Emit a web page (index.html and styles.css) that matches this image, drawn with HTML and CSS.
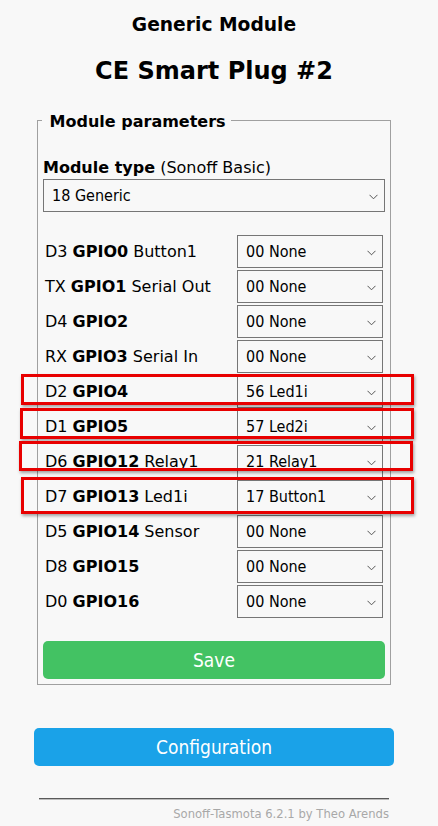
FILE: index.html
```html
<!DOCTYPE html>
<html>
<head>
<meta charset="utf-8">
<link rel="stylesheet" href="styles.css">
</head>
<body>
<div class="page">
  <h3 class="t1">Generic Module</h3>
  <h2 class="t2">CE Smart Plug #2</h2>
  <div class="main">
    <fieldset class="fs">
      <legend class="lg"><b>&nbsp;Module parameters&nbsp;</b></legend>
      <div class="mlabel"><b>Module type</b> (Sonoff Basic)</div>
      <div class="sel wide"><span>18 Generic</span><svg class="chev" width="9" height="6" viewBox="0 0 9 6"><polyline points="0.5,0.8 4.5,4.8 8.5,0.8" fill="none" stroke="#555" stroke-width="1"/></svg></div>
      <div class="rows">
        <div class="row"><div class="lab">D3 <b>GPIO0</b> Button1</div><div class="sel"><span>00 None</span><svg class="chev" width="9" height="6" viewBox="0 0 9 6"><polyline points="0.5,0.8 4.5,4.8 8.5,0.8" fill="none" stroke="#555" stroke-width="1"/></svg></div></div>
        <div class="row"><div class="lab">TX <b>GPIO1</b> Serial Out</div><div class="sel"><span>00 None</span><svg class="chev" width="9" height="6" viewBox="0 0 9 6"><polyline points="0.5,0.8 4.5,4.8 8.5,0.8" fill="none" stroke="#555" stroke-width="1"/></svg></div></div>
        <div class="row"><div class="lab">D4 <b>GPIO2</b></div><div class="sel"><span>00 None</span><svg class="chev" width="9" height="6" viewBox="0 0 9 6"><polyline points="0.5,0.8 4.5,4.8 8.5,0.8" fill="none" stroke="#555" stroke-width="1"/></svg></div></div>
        <div class="row"><div class="lab">RX <b>GPIO3</b> Serial In</div><div class="sel"><span>00 None</span><svg class="chev" width="9" height="6" viewBox="0 0 9 6"><polyline points="0.5,0.8 4.5,4.8 8.5,0.8" fill="none" stroke="#555" stroke-width="1"/></svg></div></div>
        <div class="row"><div class="lab">D2 <b>GPIO4</b></div><div class="sel"><span>56 Led1i</span><svg class="chev" width="9" height="6" viewBox="0 0 9 6"><polyline points="0.5,0.8 4.5,4.8 8.5,0.8" fill="none" stroke="#555" stroke-width="1"/></svg></div></div>
        <div class="row"><div class="lab">D1 <b>GPIO5</b></div><div class="sel"><span>57 Led2i</span><svg class="chev" width="9" height="6" viewBox="0 0 9 6"><polyline points="0.5,0.8 4.5,4.8 8.5,0.8" fill="none" stroke="#555" stroke-width="1"/></svg></div></div>
        <div class="row"><div class="lab">D6 <b>GPIO12</b> Relay1</div><div class="sel"><span>21 Relay1</span><svg class="chev" width="9" height="6" viewBox="0 0 9 6"><polyline points="0.5,0.8 4.5,4.8 8.5,0.8" fill="none" stroke="#555" stroke-width="1"/></svg></div></div>
        <div class="row"><div class="lab">D7 <b>GPIO13</b> Led1i</div><div class="sel"><span>17 Button1</span><svg class="chev" width="9" height="6" viewBox="0 0 9 6"><polyline points="0.5,0.8 4.5,4.8 8.5,0.8" fill="none" stroke="#555" stroke-width="1"/></svg></div></div>
        <div class="row"><div class="lab">D5 <b>GPIO14</b> Sensor</div><div class="sel"><span>00 None</span><svg class="chev" width="9" height="6" viewBox="0 0 9 6"><polyline points="0.5,0.8 4.5,4.8 8.5,0.8" fill="none" stroke="#555" stroke-width="1"/></svg></div></div>
        <div class="row"><div class="lab">D8 <b>GPIO15</b></div><div class="sel"><span>00 None</span><svg class="chev" width="9" height="6" viewBox="0 0 9 6"><polyline points="0.5,0.8 4.5,4.8 8.5,0.8" fill="none" stroke="#555" stroke-width="1"/></svg></div></div>
        <div class="row"><div class="lab">D0 <b>GPIO16</b></div><div class="sel"><span>00 None</span><svg class="chev" width="9" height="6" viewBox="0 0 9 6"><polyline points="0.5,0.8 4.5,4.8 8.5,0.8" fill="none" stroke="#555" stroke-width="1"/></svg></div></div>
      </div>
      <button class="btn save">Save</button>
    </fieldset>
    <button class="btn conf">Configuration</button>
    <div class="foot"><hr class="rule"><div class="credit">Sonoff-Tasmota 6.2.1 by Theo Arends</div></div>
  </div>
  <div class="mark m1"></div>
  <div class="mark m2"></div>
  <div class="mark m3"></div>
  <div class="mark m4"></div>
</div>
</body>
</html>
```
FILE: styles.css
```css
html, body {
  margin: 0;
  padding: 0;
  background: #f8f8f8;
}
body {
  font-family: "DejaVu Sans", Verdana, sans-serif;
  color: #000;
  font-size: 16px;
}
.page {
  position: relative;
  width: 438px;
  height: 826px;
  overflow: hidden;
}
.t1 {
  margin: 0;
  padding: 14px 10px 0 0;
  font-size: 18.7px;
  line-height: 22px;
  text-align: center;
  font-weight: bold;
}
.t2 {
  margin: 21px 0 0 0;
  padding-right: 10px;
  font-size: 24px;
  line-height: 28px;
  text-align: center;
  font-weight: bold;
}
.main {
  margin-left: 34px;
  width: 360px;
  margin-top: 23px;
}
.fs {
  margin: 0 0 0 3px;
  width: 354px;
  box-sizing: border-box;
  border: 1px solid #a0a0a0;
  padding: 0 5px 5px 5px;
  min-width: 0;
}
.lg {
  padding: 4px 0 0 2px;
  margin-left: -1px;
  font-size: 16px;
  line-height: 20px;
}
.mlabel {
  margin-top: 26px;
  line-height: 20px;
}
.sel {
  position: relative;
  box-sizing: border-box;
  height: 33px;
  border: 1px solid #767676;
  background: #f8f8f8;
  padding: 1px 0 0 8px;
  line-height: 30px;
  white-space: nowrap;
  font-family: "DejaVu Sans Condensed", "DejaVu Sans", sans-serif;
  font-stretch: condensed;
}
.sel.wide {
  margin-top: 1px;
}
.chev {
  position: absolute;
  right: 6px;
  top: 14px;
}
.rows {
  margin-top: 23px;
  padding: 0 2px;
}
.row {
  display: flex;
  align-items: baseline;
  height: 35px;
}
.lab {
  flex: 1;
  white-space: nowrap;
}
.row .sel {
  width: 146px;
  flex: none;
}
.btn {
  display: block;
  width: 100%;
  border: 0;
  border-radius: 5px;
  color: #fff;
  font-family: "DejaVu Sans Condensed", "DejaVu Sans", sans-serif;
  font-stretch: condensed;
  font-size: 19px;
  line-height: 38px;
  padding: 0;
}
.save {
  margin-top: 21px;
  background: #43c263;
}
.conf {
  margin-top: 43px;
  background: #1aa2e8;
}
.foot {
  padding: 0 5px;
  margin-top: 32px;
  text-align: right;
}
.rule {
  margin: 0;
  border: 0;
  height: 0;
  border-top: 1px solid #5a5a5a;
  border-bottom: 1px solid #bdbdbd;
}
.credit {
  font-size: 11.6px;
  line-height: 14px;
  margin-top: 7px;
  color: #a8a8a8;
}
.mark {
  position: absolute;
  border: 3px solid #e80000;
  box-sizing: border-box;
  box-shadow: 1px 2px 3px rgba(0,0,0,0.35);
}
.m1 { left: 21px; top: 374px; width: 393px; height: 31px; }
.m2 { left: 20px; top: 408px; width: 394px; height: 31px; }
.m3 { left: 19px; top: 441px; width: 394px; height: 30px; }
.m4 { left: 21px; top: 477px; width: 393px; height: 37px; }
```
